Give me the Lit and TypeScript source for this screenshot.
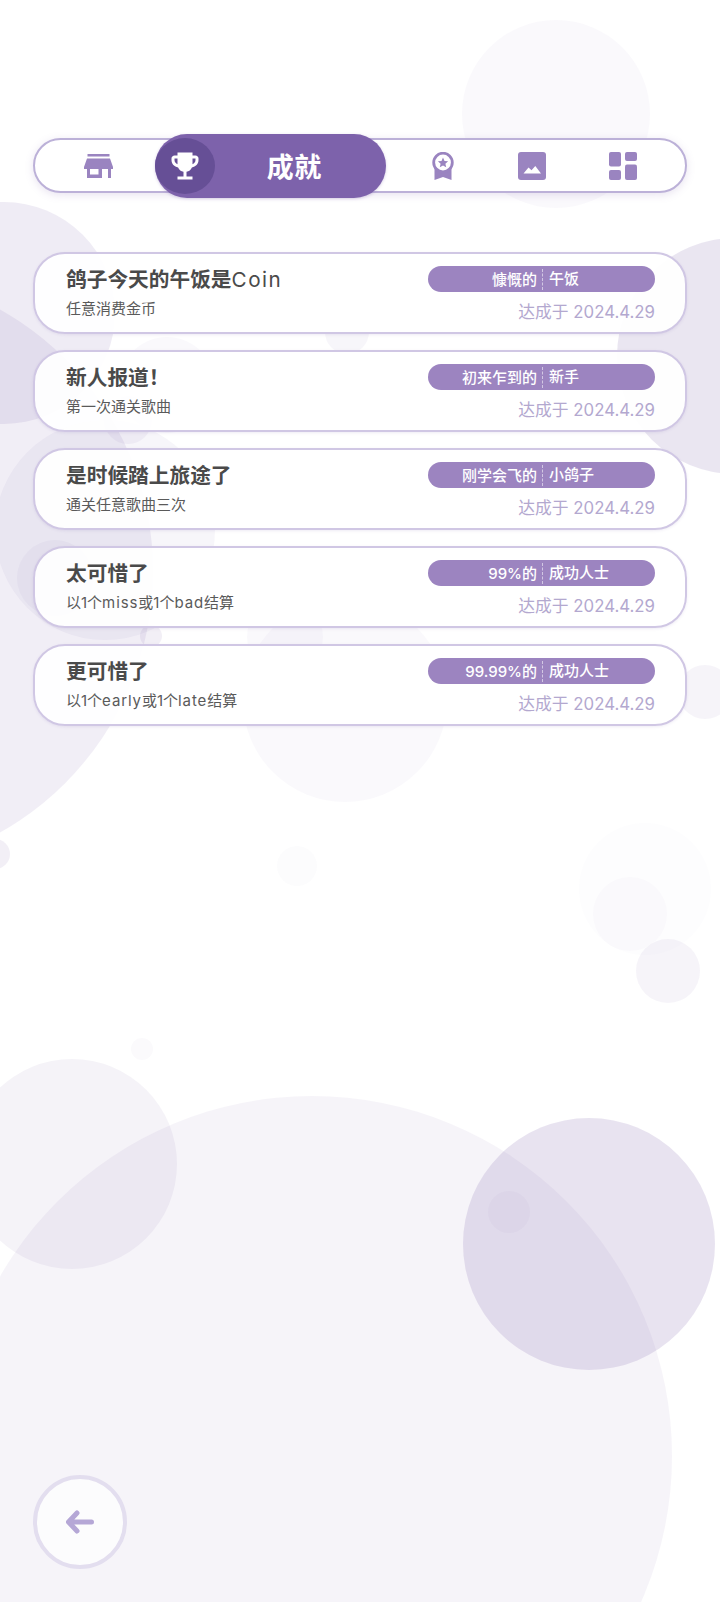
import { LitElement, css, html, svg } from "lit"
import { customElement } from "lit/decorators.js"

// cx, cy, r, opacity
const circles = [
  [556, 114, 94, 0.04],
  [4, 313, 111, 0.12],
  [-147, 571, 300, 0.11],
  [105, 530, 110, 0.06],
  [55, 578, 38, 0.05],
  [128, 420, 24, 0.07],
  [167, 385, 48, 0.04],
  [151, 636, 11, 0.1],
  [347, 332, 22, 0.06],
  [735, 356, 118, 0.16],
  [345, 700, 102, 0.04],
  [285, 637, 38, 0.04],
  [705, 692, 27, 0.07],
  [-5, 854, 15, 0.1],
  [297, 866, 20, 0.02],
  [645, 889, 66, 0.015],
  [630, 914, 37, 0.025],
  [668, 971, 32, 0.07],
  [142, 1049, 11, 0.03],
  [72, 1164, 105, 0.08],
  [312, 1456, 360, 0.07],
  [589, 1244, 126, 0.18],
  [509, 1212, 21, 0.04],
]

const achievements = [
  { title: "鸽子今天的午饭是", latin: "Coin", desc: "任意消费金币", left: "慷慨的", right: "午饭" },
  { title: "新人报道！", latin: "", desc: "第一次通关歌曲", left: "初来乍到的", right: "新手" },
  { title: "是时候踏上旅途了", latin: "", desc: "通关任意歌曲三次", left: "刚学会飞的", right: "小鸽子" },
  { title: "太可惜了", latin: "", desc: "以1个miss或1个bad结算", left: "99%的", right: "成功人士" },
  { title: "更可惜了", latin: "", desc: "以1个early或1个late结算", left: "99.99%的", right: "成功人士" },
]

@customElement("app-root")
export class AppRoot extends LitElement {
  renderBackground() {
    return html`<svg class="bg" width="720" height="1602" viewBox="0 0 720 1602">
      ${circles.map(([cx, cy, r, o]) => svg`<circle cx=${cx} cy=${cy} r=${r} fill="#7d62ab" opacity=${o}></circle>`)}
    </svg>`
  }

  // latin words sit wider than the fallback font, space them out
  renderDesc(text: string) {
    return text.split(/([a-z]+)/).map((part) => (/^[a-z]+$/.test(part) ? html`<span class="word">${part}</span>` : part))
  }

  renderNav() {
    return html`<nav class="nav">
      <div class="item">
        <svg class="icon store" viewBox="0 0 29 24">
          <path d="M3.500 0h22v2.500h-22zM3 4.500h23L29 13v2h-2v9h-3v-9h-6v9H3v-9H0v-2zM6 15v5.500h8.500V15z"></path>
        </svg>
      </div>
      <div class="pill">
        <span class="medal">
          <svg class="trophy" viewBox="0 0 24 24">
            <path
              d="M19 5h-2V3H7v2H5c-1.100 0-2 .9-2 2v1c0 2.550 1.920 4.630 4.390 4.940.63 1.500 1.980 2.630 3.610 2.960V19H7v2h10v-2h-4v-3.100c1.630-.33 2.980-1.460 3.610-2.960C19.080 12.630 21 10.550 21 8V7c0-1.100-.9-2-2-2zM5 8V7h2v3.820C5.840 10.400 5 9.300 5 8zm14 0c0 1.300-.84 2.400-2 2.820V7h2v1z"
            ></path>
          </svg>
        </span>
        <span class="pill-label">成就</span>
      </div>
      <div class="item">
        <svg class="icon badge" viewBox="0 0 22 28">
          <path d="M2.500 16h17v12l-8.500-3-8.500 3z"></path>
          <circle cx="11" cy="10.500" r="9.300" fill="#fff" stroke="#9a84c0" stroke-width="2.800"></circle>
          <path d="M11 5.500l1.500 3.400 3.600.4-2.700 2.400.8 3.500-3.200-1.800-3.200 1.800.8-3.500-2.700-2.400 3.600-.4z"></path>
        </svg>
      </div>
      <div class="item">
        <svg class="icon image" viewBox="0 0 28 28">
          <rect width="28" height="28" rx="3"></rect>
          <path fill="#fff" d="M5.500 21.500l5-6 3 2.800 3.800-4.300 5.700 7.500z"></path>
        </svg>
      </div>
      <div class="item">
        <svg class="icon dash" viewBox="0 0 28 28">
          <rect width="12" height="14.500" rx="2"></rect>
          <rect x="16" width="12" height="9" rx="2"></rect>
          <rect y="18" width="12" height="10" rx="2"></rect>
          <rect x="16" y="12.500" width="12" height="15.500" rx="2"></rect>
        </svg>
      </div>
    </nav>`
  }

  render() {
    return html`
      ${this.renderBackground()}
      <main class="page">
        ${this.renderNav()}
        <section class="list">
          ${achievements.map(
            (a) => html`<article class="card">
              <div class="info">
                <div class="title">${a.title}${a.latin ? html`<span class="latin">${a.latin}</span>` : null}</div>
                <div class="desc">${this.renderDesc(a.desc)}</div>
              </div>
              <div class="meta">
                <div class="tag">
                  <span class="tag-left">${a.left}</span>
                  <span class="tag-right">${a.right}</span>
                </div>
                <div class="date">达成于 2024.4.29</div>
              </div>
            </article>`
          )}
        </section>
        <button class="back">
          <svg viewBox="0 0 28 26" width="28" height="26">
            <path d="M11 4L2.500 13 11 22M3 13h22.500"></path>
          </svg>
        </button>
      </main>
    `
  }

  static styles = css`
    :host {
      display: block;
      position: relative;
      width: 720px;
      height: 1602px;
      overflow: hidden;
      background: #fff;
      font-family: "Inter", "Noto Sans CJK SC", sans-serif;
    }
    .bg {
      position: absolute;
      left: 0;
      top: 0;
    }
    .page {
      position: relative;
      box-sizing: border-box;
      height: 100%;
      display: flex;
      flex-direction: column;
      padding: 138px 33px 33px;
    }
    .nav {
      box-sizing: border-box;
      height: 55px;
      display: flex;
      align-items: center;
      padding: 0 18px 0 19px;
      background: #fff;
      border: 2px solid #bcb1d8;
      border-radius: 28px;
      box-shadow: 0 2px 8px rgba(125, 98, 171, 0.18);
    }
    .item {
      width: 89px;
      display: flex;
      justify-content: center;
      align-items: center;
    }
    .item:last-child {
      padding-left: 2px;
    }
    .icon {
      display: block;
      fill: #9a84c0;
    }
    .store {
      width: 29px;
      height: 24px;
    }
    .badge {
      width: 22px;
      height: 28px;
    }
    .image {
      width: 28px;
      height: 28px;
    }
    .dash {
      width: 28px;
      height: 28px;
    }
    .pill {
      flex: none;
      width: 231px;
      height: 64px;
      margin: 0 13px 0 12px;
      display: flex;
      align-items: center;
      background: #7d62ab;
      border-radius: 32px;
      color: #fff;
      box-shadow: 0 1px 3px rgba(125, 98, 171, 0.3);
    }
    .medal {
      flex: none;
      width: 60px;
      height: 56px;
      border-radius: 50%;
      background: #664f96;
      display: flex;
      align-items: center;
      justify-content: center;
    }
    .trophy {
      width: 36px;
      height: 36px;
      fill: #fff;
    }
    .pill-label {
      margin-left: 52px;
      font-size: 27px;
      font-weight: 700;
      letter-spacing: 0.5px;
    }
    .list {
      margin-top: 59px;
      display: flex;
      flex-direction: column;
      gap: 16px;
    }
    .card {
      box-sizing: border-box;
      height: 82px;
      display: flex;
      justify-content: space-between;
      padding: 12px 30px 0 31px;
      background: rgba(255, 255, 255, 0.93);
      border: 2px solid #d0c7e4;
      border-radius: 32px;
      box-shadow: 0 1px 3px rgba(125, 98, 171, 0.12);
    }
    .title {
      font-size: 20.700px;
      line-height: 28px;
      font-weight: 700;
      color: #4a4a4a;
    }
    .latin {
      font-weight: 400;
      letter-spacing: 1.500px;
    }
    .desc {
      margin-top: 4px;
      font-size: 15px;
      line-height: 22px;
      color: #5a5a5a;
    }
    .word {
      letter-spacing: 0.9px;
    }
    .meta {
      width: 227px;
    }
    .tag {
      height: 26px;
      display: grid;
      grid-template-columns: 115px 1fr;
      align-items: center;
      background: #9c84c0;
      border-radius: 13px;
      color: #fff;
      font-size: 15px;
      font-weight: 500;
      line-height: 26px;
    }
    .tag-left {
      padding-right: 5px;
      text-align: right;
      border-right: 1px dashed rgba(255, 255, 255, 0.55);
      line-height: 21px;
    }
    .tag-right {
      padding-left: 6px;
    }
    .date {
      margin-top: 8px;
      text-align: right;
      font-size: 16.800px;
      line-height: 24px;
      color: #b3a8cf;
    }
    .back {
      box-sizing: border-box;
      margin-top: auto;
      width: 94px;
      height: 94px;
      padding: 0;
      display: flex;
      align-items: center;
      justify-content: center;
      background: rgba(255, 255, 255, 0.7);
      border: 4px solid #e3deef;
      border-radius: 50%;
    }
    .back path {
      fill: none;
      stroke: #b5a7d6;
      stroke-width: 5;
      stroke-linecap: round;
      stroke-linejoin: round;
    }
  `
}
